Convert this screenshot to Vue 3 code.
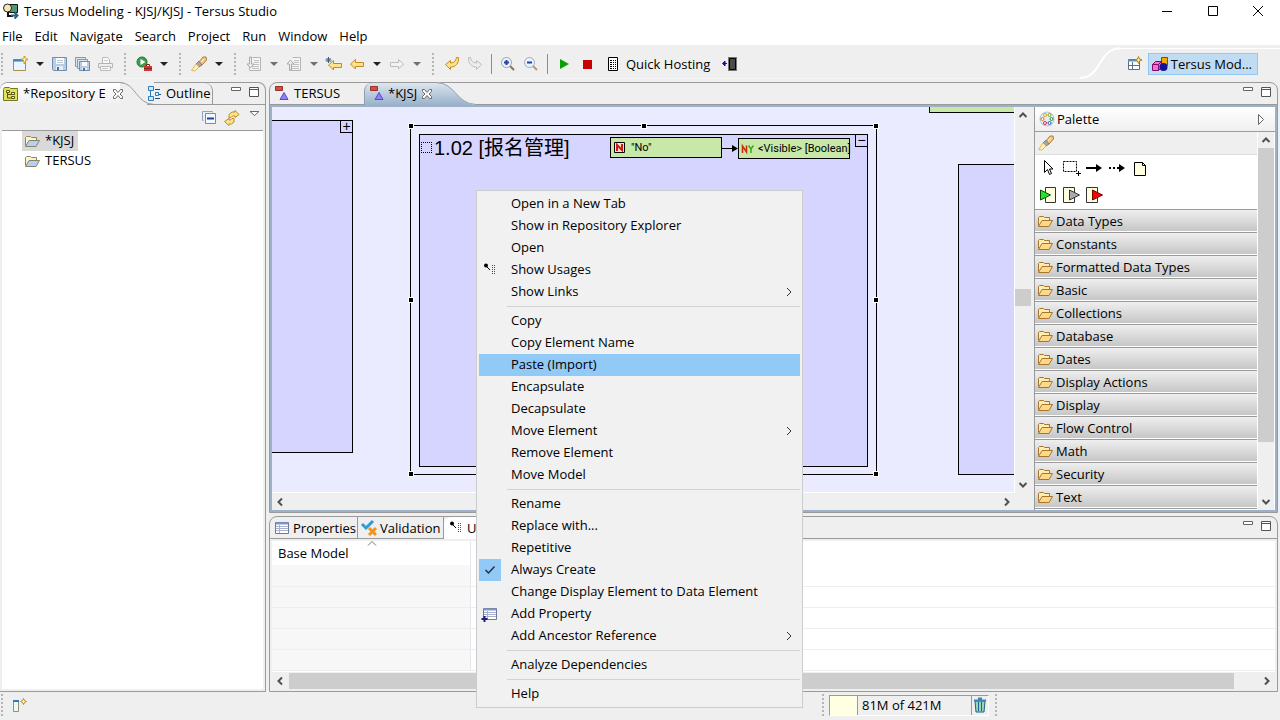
<script setup>
import { h } from 'vue'

const folder = (a, b, s) =>
  `<path d="M1.500 12.500V4.500L2.500 3.500H6.500L7.500 4.500H12.500V7.500" fill="${a}" stroke="${s}"/><path d="M1.500 13.500L5 7.500H15.500L12 13.500Z" fill="${b}" stroke="${s}"/>`
const pageIcon = '<path d="M6.500 1.500h8v13h-11v-5" fill="#f5f5f5" stroke="#b5b5b5"/><path d="M8 4.500h5M8 6.500h5M7 8.500h6M6 10.500h7M6 12.500h7" stroke="#c0c0c0"/>'
const gridIcon = '<path d="M1.500 2.500h13v11h-13z" fill="#fff" stroke="#6d7b99"/><path d="M2 3.500h12" stroke="#7c9bc8" stroke-width="2"/><path d="M2 6.500h12M2 8.500h12M2 10.500h12M5.500 5v8" stroke="#a9b1cc"/>'
const torch = '<path d="M8 6L12 1L15 1L15.500 4L11 9L9 9Z" fill="#f6c983" stroke="#b07a35"/><path d="M5 8L8 5L11 9L8 11Z" fill="#a9a5a0" stroke="#8a817a"/><path d="M.500 14.500L5 8L8 11L4 15Z" fill="#fff2b0" stroke="#e3b765"/><path d="M10 6L13 3" stroke="#fff3cf"/>'
const arrowL = (f, s) => `<path d="M1.500 8L6.500 3.500V6.500H14.500V10.500H6.500V13L1.500 8Z" fill="${f}" stroke="${s}"/>`
const arrowR = (f, s) => `<path d="M14.500 8L9.500 3.500V6.500H1.500V10.500H9.500V13L14.500 8Z" fill="${f}" stroke="${s}"/>`

const icons = {
  app: '<path d="M6.500 1.500h8v8h-8z" fill="#4d9a78" stroke="#111"/><circle cx="4.500" cy="5" r="4" fill="#f6e9b0" stroke="#222"/><path d="M5 9v4h5" fill="none" stroke="#111" stroke-width="2"/><path d="M8 12.500h6M11.500 9.500l3 3l-3 3" fill="none" stroke="#1a6b8a" stroke-width="2"/>',
  new: '<path d="M1.500 3.500h12v11h-12z" fill="#e9f5ff" stroke="#a88f4c"/><path d="M1 4.500h11" stroke="#3f7fc4" stroke-width="2"/><path d="M12.500 0v8M9 3.500h7" stroke="#d2a21c" stroke-width="2"/><path d="M12.500 2v4M11 3.500h3" stroke="#fff3b0"/>',
  save: '<path d="M.500 1.500h14v13h-13l-1-1z" fill="#b9cce0" stroke="#6e8fb0"/><path d="M4 2h8v6H4z" fill="#f7fbff"/><path d="M5 4.500h6M5 6.500h6" stroke="#b9c9d8"/><path d="M4 10h7v4H4z" fill="#e8edf2"/><path d="M5 11h2v3H5z" fill="#54718f"/>',
  saveall: '<path d="M.500 1.500h10v9h-10z" fill="#dce6ef" stroke="#7d9ab7"/><path d="M2.500 3.500h10v9h-10z" fill="#dce6ef" stroke="#7d9ab7"/><path d="M4.500 5.500h10v9h-10z" fill="#b9cce0" stroke="#6e8fb0"/><path d="M7 6h5v4H7z" fill="#f7fbff"/><path d="M7 12h5v2H7z" fill="#e8edf2"/><path d="M8 12h2v3H8z" fill="#54718f"/>',
  print: '<path d="M4.500 7V1.500h5l2 2V7" fill="#fafafa" stroke="#b9b9b9"/><path d="M.500 7.500h14v4h-14z" fill="#eee" stroke="#b4b4b4"/><path d="M2.500 10.500h10v4h-10z" fill="#f6f6f6" stroke="#bbb"/><path d="M6 4.500h4M4 12.500h6" stroke="#c8c8c8"/>',
  run: '<circle cx="6" cy="6" r="5" fill="#3ca04b" stroke="#1f7437"/><path d="M4.500 3l5 3l-5 3z" fill="#fff"/><path d="M8 10h8v5H8z" fill="#cb3b34"/><path d="M10.500 10V8.500h3V10M8 12.500h8" fill="none" stroke="#872020"/>',
  torch,
  pageDown: pageIcon + '<path d="M3.500 1v7H1L4.500 12L8 8H5.500V1Z" fill="#eee" stroke="#aaa"/>',
  pageUp: pageIcon + '<path d="M3.500 14V8H1L4.500 4L8 8H5.500v6Z" fill="#eee" stroke="#aaa"/>',
  lastEdit: '<path d="M2.500 9L7.500 4.500V7.500H15.500V11.500H7.500V14Z" fill="#ffe38a" stroke="#c48a22"/><path d="M2.500 1v6M-.500 4h6M.500 2l4 4M4.500 2l-4 4" stroke="#3b5f7d"/>',
  back: arrowL('#ffe38a', '#c48a22'),
  forward: arrowR('#f2f2f2', '#bcbcbc'),
  undo: '<path d="M1.500 8.500L6.500 4.500V7C10 7 12 5 12.500 1.500H14.500C15 7 12 11 6.500 11V13.500Z" fill="#ffe38a" stroke="#c48a22"/>',
  redo: '<path d="M14.500 8.500L9.500 4.500V7C6 7 4 5 3.500 1.500H1.500C1 7 4 11 9.500 11V13.500Z" fill="#ededed" stroke="#bdbdbd"/>',
  zoomIn: '<path d="M10 10l4 4" stroke="#8d7158" stroke-width="2"/><circle cx="6.500" cy="6.500" r="5" fill="#e9f2ff" stroke="#9aa3ad"/><path d="M6.500 4v5M4 6.500h5" stroke="#22429c" stroke-width="2"/>',
  zoomOut: '<path d="M10 10l4 4" stroke="#b09a86" stroke-width="2"/><circle cx="6.500" cy="6.500" r="5" fill="#e9f2ff" stroke="#a3abb4"/><path d="M4 6.500h5" stroke="#22429c" stroke-width="2"/>',
  play: '<path d="M4 3l9 5l-9 5z" fill="#0aa00a"/>',
  stop: '<path d="M4 4h9v9H4z" fill="#c80000"/>',
  host: '<path d="M3.500 1.500h9v13h-9z" fill="#fff" stroke="#000"/><path d="M5 4.500h6M5 6.500h6M5 8.500h6M5 10.500h6M5 12.500h6" stroke="#000" stroke-dasharray="2 1 1 1"/>',
  exitPhone: '<path d="M7.500 2.500h6v11h-6z" fill="#4a4a4a" stroke="#777" stroke-width="3"/><path d="M7.500 2.500h6v11h-6z" fill="#4a4a4a" stroke="#000"/><path d="M1 7.500h4M3 5v5L.500 7.500Z" fill="#0019b5" stroke="#0019b5"/>',
  persp: '<path d="M1.500 3.500h11v10h-11z" fill="#fff" stroke="#57708c"/><path d="M1 4.500h10" stroke="#5c8fc4" stroke-width="2"/><path d="M5.500 6v7M2 9.500h10" stroke="#57708c"/><path d="M11.500 .500l1 2.500l2.500 1l-2.500 1l-1 2.500l-1-2.500l-2.500-1l2.500-1z" fill="#ffe9a0" stroke="#a8822a"/>',
  cubes: '<path d="M9.500 1.500h6v8h-6z" fill="#f5a800" stroke="#7a5200"/><path d="M.500 8.500l3-3h6v6l-3 3h-6z" fill="#ff69d8" stroke="#7d0f68"/><path d="M.500 8.500h6v6M6.500 8.500l3-3" fill="none" stroke="#7d0f68"/><circle cx="11.500" cy="11" r="4" fill="#10149b"/>',
  repo: '<path d="M.500 3.500l1-2h5l1 1h7v12h-14z" fill="#e3e35b" stroke="#77771b"/><path d="M4.500 5v7h4M4.500 8.500h4" fill="none" stroke="#55551a"/><path d="M3.500 4.500h3v2h-3zM8.500 6.500h3v2h-3zM8.500 10.500h3v2h-3z" fill="#ffffb5" stroke="#55551a"/>',
  outline: '<path d="M1.500 .500h5v4h-5zM1.500 10.500h5v4h-5z" fill="#cdeaff" stroke="#2b7bbd"/><path d="M3.500 5v5" stroke="#2b7bbd"/><path d="M8.500 6.500h3v3h-3z" fill="#e9f6ff" stroke="#2b7bbd"/><path d="M8 3.500h5M12 8.500h2M8 12.500h5" stroke="#1f4b73"/>',
  close: '<path d="M3.500 3.500h2l2.500 3l2.500-3h2v2l-2.500 2.500l2.500 2.500v2h-2l-2.500-3l-2.500 3h-2v-2l2.500-2.500l-2.500-2.500z" fill="#fff" stroke="#6a6a6a"/>',
  collapse: '<path d="M1.500 10.500h-1v-9h10v1" fill="none" stroke="#8ba6c9"/><path d="M3.500 3.500h10v10h-10z" fill="#f4f9ff" stroke="#6c8ebd"/><path d="M5 8.500h7" stroke="#15469c" stroke-width="2"/>',
  link: '<path d="M5 8V4.500L8 2L11 2V.500L15 4.500L11 7.500V6H8.500L7 7.500Z" fill="#ffe38a" stroke="#bd8a22"/><path d="M10 8.500V12L7.500 14H5V15.500L.500 11.500L5 8.500V10H6.500L8 8.500Z" fill="#ffe38a" stroke="#bd8a22"/>',
  folderBlue: folder('#fdf3cf', '#b3d0f7', '#8a8468'),
  folder: folder('#ffedb0', '#ffd98a', '#a9752a'),
  model: '<path d="M.500 .500h7v4h-7z" fill="#cf4f45" stroke="#9c3029"/><path d="M9 6.500l4 7h-8z" fill="#8f80f5" stroke="#5a48d0"/>',
  props: gridIcon,
  valid: '<path d="M1 4l4 4l7-7" fill="none" stroke="#2f9bd8" stroke-width="3"/><path d="M8 8l7 7M15 8l-7 7" stroke="#f3941f" stroke-width="3"/>',
  usage: '<circle cx="4" cy="3.500" r="2" fill="#000"/><path d="M4 4l4 4" stroke="#000"/><path d="M10.500 3v9M12.500 3v9" stroke="#7527a8" stroke-dasharray="1 1"/>',
  addProp: gridIcon + '<path d="M2.500 10v6M-.500 13h6" stroke="#1f1f7c" stroke-width="2"/>',
  check: '<path d="M3.500 8l3 3l6-6.500" fill="none" stroke="#1f3147" stroke-width="1.500"/>',
  paletteIcon: '<circle cx="8" cy="8" r="7" fill="#e6ecf4" stroke="#b5c1d0"/><g fill="#fff"><circle cx="6" cy="4" r="1.500" stroke="#c6a80c"/><circle cx="10.500" cy="4" r="1.500" stroke="#7aa81c"/><circle cx="3.500" cy="8" r="1.500" stroke="#e06a10"/><circle cx="12.500" cy="8" r="1.500" stroke="#159a3c"/><circle cx="6" cy="12" r="1.500" stroke="#d3234a"/><circle cx="10.500" cy="12" r="1.500" stroke="#2255d0"/></g>',
  pointer: '<path d="M4.500 .500v12l3-3l2 5l2-1l-2-4.500h3.500z" fill="#fff" stroke="#000"/>',
  marquee: '<path d="M.500 1.500h13v10h-13z" fill="none" stroke="#000" stroke-dasharray="2 1"/><path d="M15.500 11v5M13 13.500h5" stroke="#000"/>',
  arrow: '<path d="M0 8h12" stroke="#000" stroke-width="2"/><path d="M10 4l6 4l-6 4z"/>',
  dotArrow: '<path d="M0 8h11" stroke="#000" stroke-width="2" stroke-dasharray="2 2"/><path d="M10 4l6 4l-6 4z"/>',
  note: '<path d="M2.500 2.500h8l3 3v10h-11zM10.500 2.500v3h3" fill="#ffffe0" stroke="#000"/>',
  portIn: '<path d="M5.500 .500h10v15h-10z" fill="#ffffe0" stroke="#333"/><path d="M.500 3v10l10-5z" fill="#1ee81e" stroke="#0a4a0a"/>',
  portMid: '<path d="M.500 .500h11v15h-11z" fill="#ffffe0" stroke="#333"/><path d="M6.500 3v10l10-5z" fill="#aaa" stroke="#333"/>',
  portOut: '<path d="M.500 .500h11v15h-11z" fill="#ffffe0" stroke="#333"/><path d="M6.500 3v10l10-5z" fill="#f00" stroke="#700"/>',
  trash: '<path d="M3 4h10l-1 11H4z" fill="#9fd3b5" stroke="#17668f"/><path d="M2 3.500h12M6 1.500h4" stroke="#3a86b5" stroke-width="2"/><path d="M6.500 5v9M9.500 5v9" stroke="#17668f"/>',
  fastView: '<path d="M1.500 3.500h5v11h-5z" fill="#e9f7ff" stroke="#9b8f6b"/><path d="M1 4h6" stroke="#2f78bd" stroke-width="2"/><path d="M11.500 1.500l1 2l2 1l-2 1l-1 2l-1-2l-2-1l2-1z" fill="#fff0b5" stroke="#b08d2a"/>',
  min: '<path d="M3.500 2.500h9v3h-9z" fill="#fff" stroke="#666"/>',
  max: '<path d="M3.500 2.500h9v9h-9zM3 4.500h10" fill="#fff" stroke="#555"/>',
  viewMenu: '<path d="M4 4.500h9l-4.500 4z" fill="#fff" stroke="#666"/>',
  left: '<path d="M10 4.500L6.500 8l3.500 3.500" fill="none" stroke="#505050" stroke-width="2"/>',
  right: '<path d="M6 4.500L9.500 8L6 11.500" fill="none" stroke="#505050" stroke-width="2"/>',
  up: '<path d="M4.500 10L8 6.500L11.500 10" fill="none" stroke="#505050" stroke-width="2"/>',
  down: '<path d="M4.500 6L8 9.500L11.500 6" fill="none" stroke="#505050" stroke-width="2"/>',
  sub: '<path d="M6 4l4 4l-4 4" fill="none" stroke="#333"/>',
  sort: '<path d="M4 9.500l4-4l4 4" fill="none" stroke="#777"/>',
  pin: '<path d="M5.500 3.500l5 5l-5 5z" fill="#fff" stroke="#666"/>',
  wmin: '<path d="M3 8.500h10" stroke="#000"/>',
  wmax: '<path d="M3.500 3.500h9v9h-9z" fill="none" stroke="#000"/>',
  wclose: '<path d="M3 3l10 10M13 3L3 13" stroke="#000"/>',
  constNo: '<path d="M2.500 2.500h10v10h-10z" fill="#f3e6c8" stroke="#000"/><path d="M5 11V5L10 10V4" fill="none" stroke="#d01818" stroke-width="2"/>',
  yesNo: '<path d="M2.500 12V5L6.500 11V4.500" fill="none" stroke="#cf2a10" stroke-width="1.500"/><path d="M8.500 4.500L11 8L13.500 4.500M11 8v4" fill="none" stroke="#3aa818" stroke-width="1.500"/>',
}

const Ico = (p) => h('svg', { class: 'ico', viewBox: '0 0 16 16', width: 16, height: 16, 'aria-hidden': 'true', innerHTML: icons[p.n] })
Ico.props = ['n']

const menus = ['File', 'Edit', 'Navigate', 'Search', 'Project', 'Run', 'Window', 'Help']
const tools = [
  { i: 'new', t: 'New' }, { d: 1 }, { i: 'save', t: 'Save' }, { i: 'saveall', t: 'Save All' }, { i: 'print', t: 'Print' }, { g: 1 },
  { i: 'run', t: 'External Tools' }, { d: 1 }, { g: 1 }, { i: 'torch', t: 'Search' }, { d: 1 }, { g: 1 },
  { i: 'pageDown', t: 'Next Annotation' }, { d: 2 }, { i: 'pageUp', t: 'Previous Annotation' }, { d: 2 },
  { i: 'lastEdit', t: 'Last Edit Location' }, { i: 'back', t: 'Back' }, { d: 1 }, { i: 'forward', t: 'Forward' }, { d: 2 }, { g: 1 },
  { i: 'undo', t: 'Undo' }, { i: 'redo', t: 'Redo' }, { s: 1 }, { i: 'zoomIn', t: 'Zoom In' }, { i: 'zoomOut', t: 'Zoom Out' }, { s: 1 },
  { i: 'play', t: 'Start' }, { i: 'stop', t: 'Stop' },
]
const drawers = ['Data Types', 'Constants', 'Formatted Data Types', 'Basic', 'Collections', 'Database', 'Dates', 'Display Actions', 'Display', 'Flow Control', 'Math', 'Security', 'Text']
const groups = [
  [{ t: 'Open in a New Tab' }, { t: 'Show in Repository Explorer' }, { t: 'Open' }, { t: 'Show Usages', i: 'usage' }, { t: 'Show Links', sub: true }],
  [{ t: 'Copy' }, { t: 'Copy Element Name' }, { t: 'Paste (Import)', on: true }, { t: 'Encapsulate' }, { t: 'Decapsulate' }, { t: 'Move Element', sub: true }, { t: 'Remove Element' }, { t: 'Move Model' }],
  [{ t: 'Rename' }, { t: 'Replace with...' }, { t: 'Repetitive' }, { t: 'Always Create', i: 'check', checked: true }, { t: 'Change Display Element to Data Element' }, { t: 'Add Property', i: 'addProp' }, { t: 'Add Ancestor Reference', sub: true }],
  [{ t: 'Analyze Dependencies' }],
  [{ t: 'Help' }],
]
const handles = ['nw', 'n', 'ne', 'w', 'e', 'sw', 's', 'se']
</script>

<template>
  <div class="window">
    <header class="titlebar">
      <Ico n="app" /><span class="title">Tersus Modeling - KJSJ/KJSJ - Tersus Studio</span>
      <button class="wbtn" aria-label="Minimize window"><Ico n="wmin" /></button>
      <button class="wbtn" aria-label="Maximize window"><Ico n="wmax" /></button>
      <button class="wbtn" aria-label="Close window"><Ico n="wclose" /></button>
    </header>
    <nav class="menubar"><button v-for="m in menus" :key="m">{{ m }}</button></nav>

    <div class="toolbar">
      <div class="tools">
        <i class="grip"></i>
        <template v-for="(t, k) in tools" :key="k">
          <i v-if="t.g" class="grip mid"></i>
          <i v-else-if="t.s" class="vsep"></i>
          <button v-else-if="t.d" class="drop" :class="{ dim: t.d === 2 }" aria-label="More"></button>
          <button v-else class="tool" :aria-label="t.t"><Ico :n="t.i" /></button>
        </template>
        <button class="tool wide"><Ico n="host" /><span>Quick Hosting</span></button>
        <button class="tool" aria-label="Close hosting"><Ico n="exitPhone" /></button>
      </div>
      <svg class="swoop" viewBox="0 0 40 34" width="40" height="34" aria-hidden="true"><path d="M0 33C22 33 18 3 40 3.500" fill="none" stroke="#fff" stroke-width="2" /></svg>
      <div class="perspectives">
        <button class="tool" aria-label="Open Perspective"><Ico n="persp" /></button>
        <button class="persp"><Ico n="cubes" /><span>Tersus Mod...</span></button>
      </div>
    </div>

    <main class="work">
      <section class="pane explorer">
        <div class="tabs">
          <button class="tab active"><Ico n="repo" /><span>*Repository E</span><Ico n="close" /></button>
          <svg class="curve" viewBox="0 0 34 23" width="34" height="23" aria-hidden="true"><path d="M0 0C16 1 16 22 34 22.500V0Z" fill="#efefef" /><path d="M0 .500C16 1 16 22 34 22.500" fill="none" stroke="#9a9a9a" /></svg>
          <button class="tab outline"><Ico n="outline" /><span>Outline</span></button>
          <div class="tabfill"><button aria-label="Minimize"><Ico n="min" /></button><button aria-label="Maximize"><Ico n="max" /></button></div>
        </div>
        <div class="viewbar">
          <button aria-label="Collapse All"><Ico n="collapse" /></button><button aria-label="Link with Editor"><Ico n="link" /></button><button class="vm" aria-label="View Menu"><Ico n="viewMenu" /></button>
        </div>
        <ul class="tree">
          <li><button class="sel"><Ico n="folderBlue" /><span>*KJSJ</span></button></li>
          <li><button><Ico n="folderBlue" /><span>TERSUS</span></button></li>
        </ul>
      </section>

      <div class="right">
        <section class="pane editor">
          <div class="tabs">
            <button class="tab idle"><Ico n="model" /><span>TERSUS</span></button>
            <button class="tab current"><Ico n="model" /><span>*KJSJ</span><Ico n="close" /></button>
            <svg class="curve" viewBox="0 0 40 23" width="40" height="23" aria-hidden="true">
              <defs><linearGradient id="tabBlue" x1="0" y1="0" x2="0" y2="1"><stop offset="0" stop-color="#dde6ef" /><stop offset="1" stop-color="#9ab2ca" /></linearGradient></defs>
              <path d="M0 0C20 1 20 22 40 23H0Z" fill="url(#tabBlue)" /><path d="M0 .500C20 1 20 22 40 22.500" fill="none" stroke="#8c9fb2" />
            </svg>
            <div class="tabfill"><button aria-label="Minimize"><Ico n="min" /></button><button aria-label="Maximize"><Ico n="max" /></button></div>
          </div>
          <div class="editbody">
            <div class="diagram">
              <div class="canvas">
                <div class="box b-left"><span class="fold">+</span></div>
                <div class="sel-frame"><i v-for="p in handles" :key="p" class="handle" :class="p"></i></div>
                <div class="box b-main">
                  <i class="dots"></i><span class="name">1.02 [报名管理]</span>
                  <div class="node n1"><Ico n="constNo" /><span>"No"</span></div>
                  <svg class="flow" viewBox="0 0 17 9" width="17" height="9" aria-hidden="true"><path d="M0 4.500h12" stroke="#000" /><path d="M10 1l6 3.500l-6 3.500z" /></svg>
                  <div class="node n2"><Ico n="yesNo" /><span>&lt;Visible&gt; [Boolean]</span></div>
                  <span class="fold">−</span>
                </div>
                <div class="node n3"></div>
                <div class="box b-right"></div>
              </div>
              <div class="vscroll"><Ico n="up" /><i class="track"><i class="thumb"></i></i><Ico n="down" /></div>
              <div class="hscroll"><Ico n="left" /><i class="track"></i><Ico n="right" /></div>
            </div>
            <aside class="palette">
              <div class="phead"><Ico n="paletteIcon" /><span>Palette</span><button aria-label="Hide Palette"><Ico n="pin" /></button></div>
              <div class="pbody">
                <div class="plist">
                  <div class="pbar"><button aria-label="Find"><Ico n="torch" /></button></div>
                  <div class="ptools">
                    <button aria-label="Select"><Ico n="pointer" /></button><button aria-label="Marquee"><Ico n="marquee" /></button><button aria-label="Flow"><Ico n="arrow" /></button><button aria-label="Link"><Ico n="dotArrow" /></button><button aria-label="Note"><Ico n="note" /></button>
                    <button aria-label="Trigger"><Ico n="portIn" /></button><button aria-label="Exit"><Ico n="portMid" /></button><button aria-label="Error exit"><Ico n="portOut" /></button>
                  </div>
                  <button v-for="d in drawers" :key="d" class="drawer"><Ico n="folder" /><span>{{ d }}</span></button>
                  <i class="drawer-end"></i>
                </div>
                <div class="vscroll"><Ico n="up" /><i class="track"><i class="thumb"></i></i><Ico n="down" /></div>
              </div>
            </aside>
          </div>
        </section>

        <section class="pane lower">
          <div class="tabs">
            <button class="tab p1"><Ico n="props" /><span>Properties</span></button>
            <button class="tab p2"><Ico n="valid" /><span>Validation</span></button>
            <button class="tab p3"><Ico n="usage" /><span>Usages</span></button>
            <div class="tabfill"><button aria-label="Minimize"><Ico n="min" /></button><button aria-label="Maximize"><Ico n="max" /></button></div>
          </div>
          <div class="tablewrap">
            <table>
              <thead><tr><th>Base Model<Ico n="sort" /></th><th></th></tr></thead>
              <tbody><tr v-for="r in 5" :key="r"><td></td><td></td></tr></tbody>
            </table>
          </div>
          <div class="hscroll"><Ico n="left" /><i class="track"><i class="thumb"></i></i><Ico n="right" /></div>
        </section>
      </div>
    </main>

    <footer class="status">
      <i class="grip"></i><button class="fast" aria-label="Show View as a Fast View"><Ico n="fastView" /></button>
      <i class="grip heapgrip"></i>
      <div class="heap"><i class="used"></i><span>81M of 421M</span><button aria-label="Run Garbage Collector"><Ico n="trash" /></button></div>
      <i class="grip"></i>
    </footer>

    <div class="context" role="menu">
      <div v-for="(g, k) in groups" :key="k" class="group">
        <button v-for="m in g" :key="m.t" role="menuitem" :class="{ on: m.on }">
          <span class="gut" :class="{ checked: m.checked }"><Ico v-if="m.i" :n="m.i" /></span><span class="lbl">{{ m.t }}</span><Ico v-if="m.sub" n="sub" />
        </button>
      </div>
    </div>
  </div>
</template>

<style>
html, body { margin: 0; height: 100%; }
</style>

<style scoped>
.window { position: relative; display: flex; flex-direction: column; height: 100vh; overflow: hidden; background: #efefef; color: #000; font: 13px/20px "Open Sans", "Noto Sans", "Noto Sans CJK SC", sans-serif; }
.window * { box-sizing: border-box; }
button { display: flex; align-items: center; margin: 0; padding: 0; border: 0; background: none; color: inherit; font: inherit; white-space: nowrap; }
i { display: block; flex: none; }
.ico { display: block; flex: none; overflow: visible; }
.titlebar { display: flex; align-items: center; height: 24px; flex: none; background: #fff; padding: 0 0 2px 3px; }
.title { flex: 1; margin-left: 5px; }
.wbtn { width: 46px; height: 22px; justify-content: center; }
.wbtn:last-child { width: 44px; }
.menubar { display: flex; gap: 12px; height: 21px; flex: none; background: #fff; padding: 0 2px; }
.menubar button { height: 24px; }

.toolbar { display: flex; height: 37px; flex: none; }
.tools { display: flex; flex: 1; align-items: center; height: 34px; padding-top: 5px; border-bottom: 1px solid #f4f4f4; }
.grip { width: 3px; height: 22px; margin: 0 4px 0 1px; background: repeating-linear-gradient(#b5b5b5 0 2px, transparent 2px 4px); clip-path: inset(0 1px 0 0); }
.grip.mid { margin: 0 5px 0 7px; }
.tool { width: 23px; height: 22px; justify-content: center; }
.drop { width: 17px; height: 22px; justify-content: center; }
.drop::before { content: ""; border: 4px solid transparent; border-top-color: #222; border-bottom: 0; }
.drop.dim::before { border-top-color: #707070; }
.vsep { width: 1px; height: 20px; background: #8c8c8c; margin: 0 4px 0 5px; }
.tool.wide { width: auto; gap: 5px; margin: 0 8px 0 7px; }
.swoop { flex: none; }
.perspectives { display: flex; align-items: center; gap: 1px; height: 34px; margin-top: 3px; padding: 0 22px 4px 0; border-top: 1px solid #fff; width: 160px; justify-content: flex-end; }
.persp { height: 22px; padding: 0 5px 0 3px; gap: 3px; background: #c0dcf3; border: 1px solid #90c8f6; }

.work { display: flex; flex: 1; min-height: 0; gap: 3px; padding-right: 2px; }
.pane { display: flex; flex-direction: column; border: 1px solid #9a9a9a; background: #efefef; min-height: 0; }
.tabs { display: flex; height: 22px; flex: none; }
.tab { height: 22px; flex: none; }
.tab span, .tree span, .lbl { padding-bottom: 2px; }
.tabfill { display: flex; flex: 1; justify-content: flex-end; border-bottom: 1px solid #9a9a9a; padding-right: 2px; }
.tabfill button { width: 18px; justify-content: center; align-items: flex-start; padding-top: 2px; }
.curve { flex: none; margin-top: -1px; }

.explorer { width: 266px; flex: none; border-left: 0; border-radius: 8px 8px 0 0; padding: 0 2px 2px; }
.explorer .tabs { margin: 0 -2px; }
.explorer .active { padding-left: 3px; gap: 4px; width: 120px; background: linear-gradient(#fff, #efefef); border-radius: 8px 0 0 0; }
.explorer .outline { padding-right: 1px; margin-left: -7px; gap: 3px; border-right: 1px solid #9a9a9a; border-bottom: 1px solid #9a9a9a; border-radius: 0 8px 0 0; }
.viewbar { display: flex; justify-content: flex-end; gap: 6px; height: 26px; flex: none; padding: 1px 0 0; border-bottom: 1px solid #9a9a9a; }
.vm { align-items: flex-start; margin-right: 1px; padding-top: 1px; }
.tree { flex: 1; margin: 0; padding: 0 0 0 20px; list-style: none; background: #fff; }
.tree button { height: 20px; padding: 0 4px 0 2px; gap: 5px; }
.tree .sel { background: #d9d9d9; }

.right { display: flex; flex: 1; flex-direction: column; gap: 3px; min-width: 0; }
.editor { flex: 1; border-radius: 8px 8px 0 0; }
.editor .idle { width: 94px; padding-left: 5px; gap: 3px; border-bottom: 1px solid #9a9a9a; }
.editor .current { padding: 0 0 0 5px; gap: 2px; width: 72px; background: linear-gradient(#dde6ef, #9ab2ca); border-left: 1px solid #8c9fb2; border-radius: 8px 0 0 0; }
.editbody { display: flex; flex: 1; min-height: 0; border: 2px solid #9cb1c9; }
.diagram { display: grid; flex: 1; min-width: 0; grid-template: minmax(0, 1fr) 17px / minmax(0, 1fr) 16px; background: #efefef; margin-right: 3px; }
.canvas { position: relative; overflow: hidden; background: #ebebff; border-right: 1px solid #fff; border-bottom: 1px solid #fff; }
.box { position: absolute; background: #d5d5ff; border: 1px solid #000; }
.b-left { left: -2px; top: 13px; width: 83px; height: 333px; }
.b-main { left: 147px; top: 27px; width: 449px; height: 333px; }
.b-right { left: 686px; top: 57px; width: 200px; height: 311px; }
.sel-frame { position: absolute; left: 138px; top: 18px; width: 467px; height: 350px; border: 1px solid #000; }
.handle { position: absolute; width: 6px; height: 6px; background: #000; border: 1px solid #fff; margin: -3px; }
.nw, .n, .ne { top: 0; } .w, .e { top: 50%; } .sw, .s, .se { top: 100%; }
.nw, .w, .sw { left: 0; } .n, .s { left: 50%; } .ne, .e, .se { left: 100%; }
.fold { position: absolute; right: -1px; top: -1px; width: 13px; height: 13px; border: 1px solid #000; font: 14px/10px "Liberation Sans", sans-serif; text-align: center; }
.dots { position: absolute; left: 1px; top: 7px; width: 11px; height: 11px; border: 1px dotted #000; }
.name { position: absolute; left: 14px; top: 2px; font: 20px/22px "Liberation Sans", "Noto Sans CJK SC", sans-serif; white-space: nowrap; }
.node { position: absolute; display: flex; align-items: center; background: #c8e8a8; border: 1px solid #000; height: 21px; font: 11px/18px Roboto, "Noto Sans", sans-serif; white-space: nowrap; }
.n1 { left: 190px; top: 2px; width: 112px; padding-left: 1px; gap: 3px; }
.n2 { left: 318px; top: 3px; width: 112px; padding-left: 1px; gap: 2px; }
.n3 { left: 657px; top: -15px; width: 200px; }
.flow { position: absolute; left: 302px; top: 9px; }
.vscroll { display: flex; flex-direction: column; width: 16px; background: #efefef; }
.vscroll .track, .hscroll .track { flex: 1; position: relative; }
.thumb { position: absolute; background: #cdcdcd; }
.diagram .vscroll .thumb { left: 0; right: 0; top: 47%; height: 17px; }
.hscroll { display: flex; height: 16px; flex: none; background: #efefef; }
.diagram .hscroll { align-self: center; }

.palette { display: flex; flex-direction: column; width: 241px; flex: none; border-left: 1px solid #9a9a9a; background: #fff; }
.phead { display: flex; align-items: center; gap: 2px; height: 25px; flex: none; padding: 0 6px 0 4px; background: linear-gradient(#fff, #efefef); border-bottom: 1px solid #9a9a9a; }
.phead button { margin-left: auto; }
.pbody { display: flex; flex: 1; min-height: 0; padding-right: 1px; }
.plist { flex: 1; overflow: hidden; margin-right: 1px; }
.pbar { height: 23px; padding: 3px; background: #efefef; border-bottom: 1px solid #ddd; }
.ptools { display: flex; flex-wrap: wrap; align-content: flex-start; gap: 11px 7px; height: 54px; padding: 5px 100px 0 5px; }
.drawer { width: 100%; height: 23px; gap: 3px; padding: 0 2px; border-top: 1px solid #9a9a9a; border-bottom: 1px solid #fff; background: linear-gradient(#efefef, #c6c6c6); }
.drawer-end { height: 1px; background: #9a9a9a; }
.palette .thumb { left: 0; right: 0; top: 0; height: 85%; }

.lower { height: 176px; flex: none; border-radius: 8px 8px 0 0; }
.lower .tab { gap: 3px; padding-left: 4px; border-bottom: 1px solid #9a9a9a; border-right: 1px solid #9a9a9a; }
.lower .tab span { padding-bottom: 0; }
.lower .p1 { width: 88px; }
.lower .p2 { width: 86px; padding-left: 3px; border-radius: 8px 0 0 0; }
.lower .p3 { width: 90px; background: #fff; border-bottom: 0; border-radius: 8px 0 0 0; }
.tablewrap { flex: 1; overflow: hidden; margin: 2px 2px 1px; background: #fff; }
table { width: 100%; border-collapse: collapse; table-layout: fixed; }
th { position: relative; height: 24px; padding: 0 6px 1px; text-align: left; font-weight: 400; background: #fff; }
th:first-child { width: 198px; border-right: 1px solid #e3e8ee; }
th .ico { position: absolute; left: 92px; top: -5px; }
td { height: 21px; padding: 0; border-bottom: 1px solid #eee; }
td:first-child { background: #f7f7f7; border-right: 1px solid #e3e8ee; }
.lower .hscroll { margin: 0 2px 2px; }
.lower .hscroll .thumb { left: 1px; right: 25px; top: 0; bottom: 0; }

.status { display: flex; align-items: center; height: 28px; flex: none; padding: 0 278px 2px 0; }
.fast { margin-left: 4px; }
.heapgrip { margin-left: auto; }
.heap { display: flex; align-items: center; width: 160px; height: 21px; margin-right: 5px; border: 1px solid #9a9a9a; border-right-color: #fff; border-bottom-color: #fff; }
.used { width: 28px; height: 19px; background: #ffffe1; border-right: 1px solid #9a9a9a; }
.heap span { flex: 1; padding: 0 0 1px 4px; }
.heap button { height: 19px; border-left: 1px solid #9a9a9a; }

.context { position: absolute; left: 476px; top: 190px; width: 327px; padding: 2px; background: #f1f1f1; border: 1px solid #ccc; }
.group + .group { position: relative; padding-top: 7px; }
.group + .group::before { content: ""; position: absolute; left: 28px; right: 0; top: 3px; border-top: 1px solid #d2d2d2; }
.context button { width: 100%; height: 22px; padding-right: 3px; }
.context .on { background: #91c9f7; }
.gut { display: flex; align-items: center; justify-content: center; width: 22px; height: 22px; margin-right: 10px; }
.gut.checked { background: #91c9f7; }
.lbl { flex: 1; text-align: left; }
</style>
